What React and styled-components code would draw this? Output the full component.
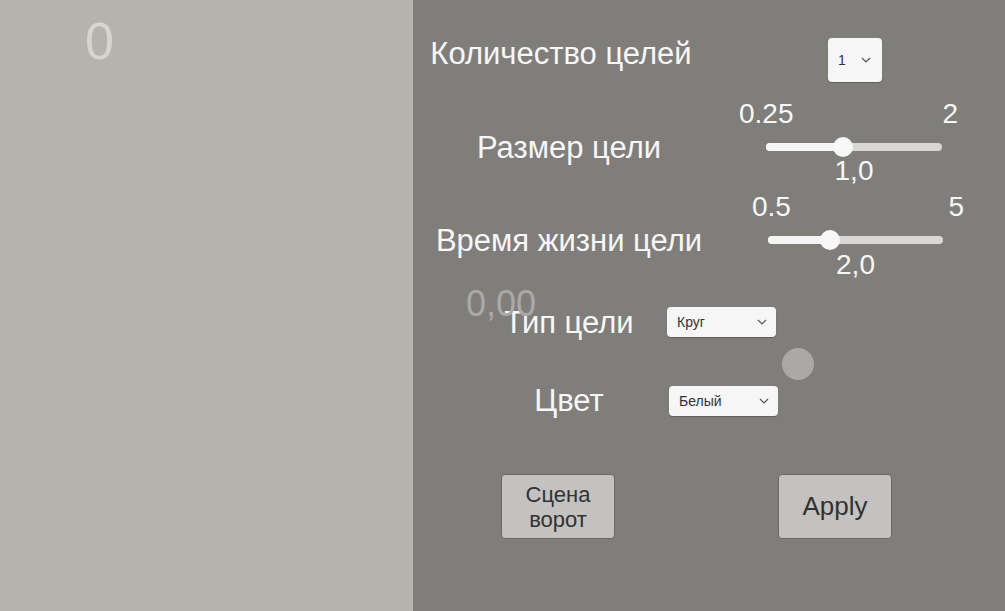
import React from "react";
import styled, { createGlobalStyle } from "styled-components";

const GlobalStyle = createGlobalStyle`
  html, body {
    margin: 0;
    padding: 0;
    height: 100%;
    overflow: hidden;
  }
  body {
    font-family: "Liberation Sans", Arial, sans-serif;
  }
`;

const StPage = styled.div`
  display: flex;
  width: 100vw;
  height: 100vh;
`;

const StLeftPane = styled.section`
  width: 413px;
  flex-shrink: 0;
  background-color: #b6b3ad;
  padding: 15px 0 0 85px;
  box-sizing: border-box;
`;

const StScore = styled.div`
  font-size: 52px;
  line-height: 52px;
  color: #d7d5d0;
`;

const StRightPane = styled.main`
  flex: 1;
  position: relative;
  background-color: #807e7a;
  display: flex;
  flex-direction: column;
`;

const StRow = styled.div`
  display: grid;
  grid-template-columns: 200px auto;
  align-items: center;
  padding-left: 56px;
  margin-top: ${(p) => p.$top || 0}px;
  height: ${(p) => (p.$height ? `${p.$height}px` : "auto")};
`;

const StLabelCell = styled.div`
  display: flex;
  justify-content: center;
  margin-right: ${(p) => (p.$shift < 0 ? -p.$shift * 2 : 0)}px;
  margin-top: ${(p) => (p.$lift < 0 ? -p.$lift * 2 : 0)}px;
  margin-bottom: ${(p) => (p.$lift > 0 ? p.$lift * 2 : 0)}px;
`;

const StLabel = styled.span`
  white-space: nowrap;
  font-size: 31px;
  line-height: 34px;
  color: #f7f7f7;
`;

const StControl = styled.div`
  display: flex;
  margin-left: ${(p) => p.$offset || 0}px;
`;

const StDropdown = styled.div`
  display: flex;
  align-items: center;
  justify-content: space-between;
  box-sizing: border-box;
  width: ${(p) => p.$w}px;
  height: ${(p) => p.$h}px;
  padding: 0 ${(p) => p.$pr}px 0 ${(p) => p.$pl}px;
  background-color: #f6f6f6;
  border-radius: 4px;
  box-shadow: 0 1px 1px rgba(40, 40, 40, 0.35);
  font-size: 14px;
  color: #333333;
`;

const StSlider = styled.div`
  display: flex;
  flex-direction: column;
  width: ${(p) => p.$w}px;
`;

const StEnds = styled.div`
  display: flex;
  justify-content: space-between;
  margin: 0 ${(p) => p.$right}px 0 ${(p) => p.$left}px;
  font-size: 28px;
  line-height: 28px;
  color: #f7f7f7;
`;

const StTrackWrap = styled.div`
  height: 38px;
  display: flex;
  align-items: center;
`;

const StTrack = styled.div`
  position: relative;
  width: 100%;
  height: 8px;
  border-radius: 4px;
  background-color: #d9d8d5;
`;

const StFill = styled.div`
  position: absolute;
  left: 0;
  top: 0;
  bottom: 0;
  border-radius: 4px;
  background-color: #f5f5f5;
`;

const StHandle = styled.div`
  position: absolute;
  top: 50%;
  width: 20px;
  height: 20px;
  margin: -10px 0 0 -10px;
  border-radius: 50%;
  background-color: #f8f8f8;
`;

const StValue = styled.div`
  margin-top: ${(p) => p.$gap}px;
  text-align: center;
  font-size: 28px;
  line-height: 26px;
  color: #f7f7f7;
`;

const StGhost = styled.div`
  position: absolute;
  left: 53px;
  top: 285px;
  font-size: 36px;
  line-height: 38px;
  color: #aba9a5;
`;

const StPreview = styled.div`
  width: 32px;
  height: 32px;
  border-radius: 50%;
  background-color: #aaa9a6;
`;

const StButtons = styled.div`
  display: flex;
  align-items: center;
  gap: 163px;
  padding-left: 88px;
  margin-top: 60px;
`;

const StButton = styled.button`
  box-sizing: border-box;
  width: 114px;
  height: 65px;
  padding: 0;
  border: 1px solid #6a6966;
  border-radius: 4px;
  background-color: #c3c2c0;
  font-family: "Liberation Sans", Arial, sans-serif;
  font-size: ${(p) => p.$size}px;
  line-height: 25px;
  color: #323232;
`;

function Chevron() {
  return (
    <svg width="10" height="6" viewBox="0 0 10 6">
      <polyline
        points="1,1 5,5 9,1"
        fill="none"
        stroke="#555"
        strokeWidth="1.2"
      />
    </svg>
  );
}

function Slider({ min, max, value, label, width, endLeft, endRight, gap }) {
  const inner = width - 20;
  const pos = 10 + ((value - min) / (max - min)) * inner;
  return (
    <StSlider $w={width}>
      <StEnds $left={endLeft} $right={endRight}>
        <span>{min}</span>
        <span>{max}</span>
      </StEnds>
      <StTrackWrap>
        <StTrack>
          <StFill style={{ width: `${pos}px` }} />
          <StHandle style={{ left: `${pos}px` }} />
        </StTrack>
      </StTrackWrap>
      <StValue $gap={gap}>{label}</StValue>
    </StSlider>
  );
}

function App() {
  return (
    <StPage>
      <GlobalStyle />
      <StLeftPane>
        <StScore>0</StScore>
      </StLeftPane>
      <StRightPane>
        <StGhost>0,00</StGhost>

        <StRow $top={37} $height={44}>
          <StLabelCell $shift={-8} $lift={6}>
            <StLabel>Количество целей</StLabel>
          </StLabelCell>
          <StControl $offset={159}>
            <StDropdown $w={54} $h={44} $pl={10} $pr={11}>
              <span>1</span>
              <Chevron />
            </StDropdown>
          </StControl>
        </StRow>

        <StRow $top={19}>
          <StLabelCell $lift={-6}>
            <StLabel>Размер цели</StLabel>
          </StLabelCell>
          <StControl $offset={97}>
            <Slider
              min="0.25"
              max="2"
              value={1}
              label="1,0"
              width={176}
              endLeft={-27}
              endRight={-16}
              gap={-8}
            />
          </StControl>
        </StRow>

        <StRow $top={9}>
          <StLabelCell $lift={-5}>
            <StLabel>Время жизни цели</StLabel>
          </StLabelCell>
          <StControl $offset={99}>
            <Slider
              min="0.5"
              max="5"
              value={2}
              label="2,0"
              width={175}
              endLeft={-16}
              endRight={-21}
              gap={-7}
            />
          </StControl>
        </StRow>

        <StRow $top={26} $height={30}>
          <StLabelCell $lift={-1}>
            <StLabel>Тип цели</StLabel>
          </StLabelCell>
          <StControl $offset={-2}>
            <StDropdown $w={109} $h={30} $pl={10} $pr={9}>
              <span>Круг</span>
              <Chevron />
            </StDropdown>
          </StControl>
        </StRow>

        <StRow $top={14} $height={32}>
          <StLabelCell />
          <StControl $offset={113}>
            <StPreview />
          </StControl>
        </StRow>

        <StRow $top={4} $height={30}>
          <StLabelCell>
            <StLabel>Цвет</StLabel>
          </StLabelCell>
          <StControl>
            <StDropdown $w={109} $h={30} $pl={10} $pr={9}>
              <span>Белый</span>
              <Chevron />
            </StDropdown>
          </StControl>
        </StRow>

        <StButtons>
          <StButton $size={22}>
            Сцена
            <br />
            ворот
          </StButton>
          <StButton $size={26}>Apply</StButton>
        </StButtons>
      </StRightPane>
    </StPage>
  );
}

export default App;
